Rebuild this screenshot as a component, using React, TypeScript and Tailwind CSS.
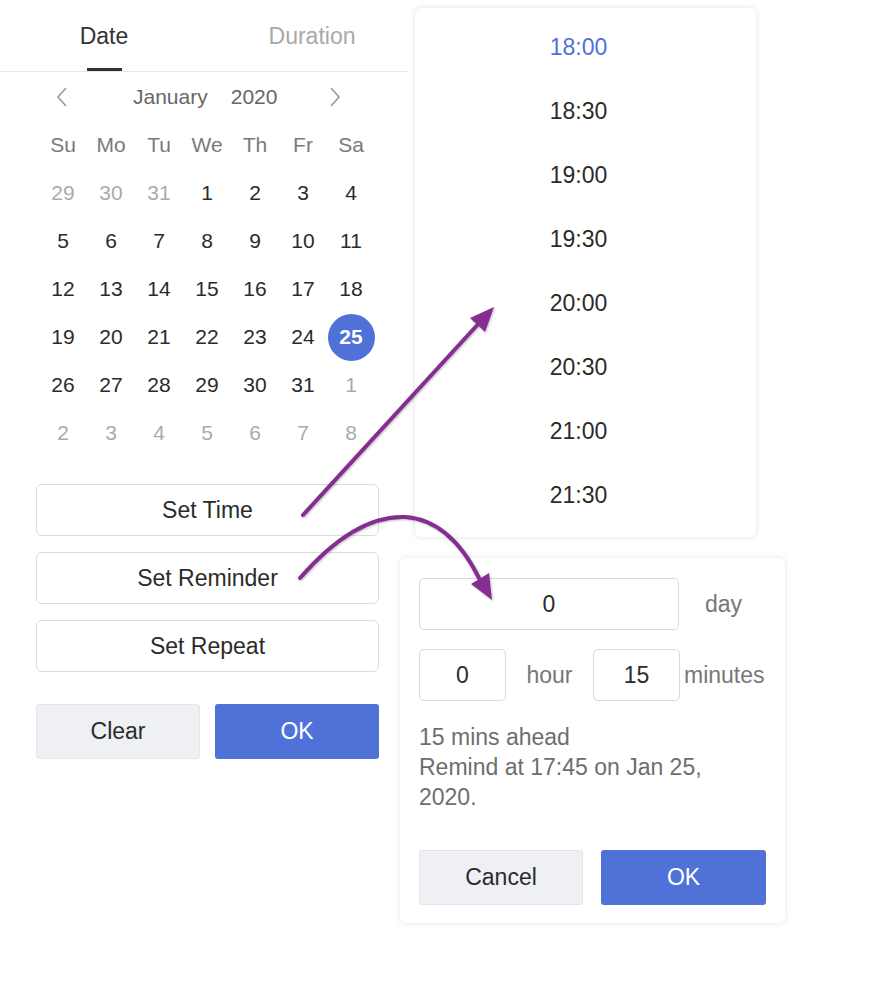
import React from 'react';

const font = { fontFamily: '"Liberation Sans", Arial, sans-serif' };

const weekdays = ['Su', 'Mo', 'Tu', 'We', 'Th', 'Fr', 'Sa'];

// [label, muted]
const days: [number, boolean][] = [
  [29, true], [30, true], [31, true], [1, false], [2, false], [3, false], [4, false],
  [5, false], [6, false], [7, false], [8, false], [9, false], [10, false], [11, false],
  [12, false], [13, false], [14, false], [15, false], [16, false], [17, false], [18, false],
  [19, false], [20, false], [21, false], [22, false], [23, false], [24, false], [25, false],
  [26, false], [27, false], [28, false], [29, false], [30, false], [31, false], [1, true],
  [2, true], [3, true], [4, true], [5, true], [6, true], [7, true], [8, true],
];

const times = ['18:00', '18:30', '19:00', '19:30', '20:00', '20:30', '21:00', '21:30'];

function Chevron({ dir }: { dir: 'left' | 'right' }) {
  return (
    <svg width="12" height="20" viewBox="0 0 12 20" fill="none" stroke="#9a9a9a" strokeWidth="1.6">
      {dir === 'left' ? <path d="M10 1 L2 10 L10 19" /> : <path d="M2 1 L10 10 L2 19" />}
    </svg>
  );
}

function DatePanel() {
  return (
    <div className="w-[408px] bg-white flex flex-col">
      {/* tabs */}
      <div className="h-[72px] border-b border-[#e8e8e8] flex overflow-hidden">
        <div className="w-[208px] shrink-0 flex flex-col items-center">
          <span className="mt-[22px] text-[23px] leading-[28px] text-[#333]">Date</span>
          <div className="mt-auto w-[35px] h-[3px] bg-[#333]" />
        </div>
        <div className="w-[208px] shrink-0 flex justify-center">
          <span className="mt-[22px] text-[23px] leading-[28px] text-[#a9a9a9]">Duration</span>
        </div>
      </div>

      {/* month nav */}
      <div className="h-[49px] flex items-center text-[21px] text-[#666]">
        <div className="w-[133px] pl-[56px]"><Chevron dir="left" /></div>
        <span>January</span>
        <span className="ml-[23px]">2020</span>
        <div className="ml-[52px]"><Chevron dir="right" /></div>
      </div>

      {/* grid */}
      <div className="pl-[39px] grid grid-cols-[repeat(7,48px)] auto-rows-[48px] text-[21px]">
        {weekdays.map((w) => (
          <div key={w} className="flex items-center justify-center text-[#7a7a7a]">{w}</div>
        ))}
        {days.map(([d, muted], i) => (
          <div key={i} className="flex items-center justify-center">
            {d === 25 && !muted ? (
              <span className="w-[47px] h-[47px] rounded-full bg-[#4f71d8] text-white font-bold flex items-center justify-center">25</span>
            ) : (
              <span className={muted ? 'text-[#ababab]' : 'text-[#2b2b2b]'}>{d}</span>
            )}
          </div>
        ))}
      </div>

      {/* actions */}
      <div className="mt-[27px] ml-[36px] w-[343px] flex flex-col gap-[16px]">
        {['Set Time', 'Set Reminder', 'Set Repeat'].map((l) => (
          <button key={l} className="h-[52px] rounded-[6px] border border-[#dcdcdc] bg-white text-[23px] text-[#2b2b2b]">{l}</button>
        ))}
      </div>
      <div className="mt-[32px] ml-[36px] w-[343px] flex gap-[15px]">
        <button className="w-[164px] h-[55px] rounded-[3px] border border-[#e2e4e8] bg-[#eef0f4] text-[23px] text-[#2b2b2b]">Clear</button>
        <button className="w-[164px] h-[55px] rounded-[3px] bg-[#5072d8] text-[23px] text-white">OK</button>
      </div>
      <div className="h-[40px]" />
    </div>
  );
}

function TimeDropdown() {
  return (
    <div className="ml-[7px] mt-[8px] w-[341px] h-[529px] bg-white rounded-[6px] shadow-[0_0_6px_rgba(0,0,0,0.12)] pt-[7px] pr-[14px]">
      {times.map((t, i) => (
        <div key={t} className={`h-[64px] flex items-center justify-center text-[23px] ${i === 0 ? 'text-[#4f71d8]' : 'text-[#2b2b2b]'}`}>{t}</div>
      ))}
    </div>
  );
}

function ReminderPanel() {
  return (
    <div className="ml-[-8px] mt-[21px] w-[385px] bg-white rounded-[6px] shadow-[0_0_6px_rgba(0,0,0,0.1)] px-[19px] pt-[20px] pb-[18px] text-[23px]">
      <div className="flex items-center">
        <div className="w-[260px] h-[52px] rounded-[5px] border border-[#d9d9d9] flex items-center justify-center text-[#2b2b2b]">0</div>
        <span className="ml-[26px] text-[#777]">day</span>
      </div>
      <div className="mt-[19px] flex items-center">
        <div className="w-[87px] h-[52px] rounded-[5px] border border-[#d9d9d9] flex items-center justify-center text-[#2b2b2b]">0</div>
        <span className="w-[87px] text-center text-[#777]">hour</span>
        <div className="w-[87px] h-[52px] rounded-[5px] border border-[#d9d9d9] flex items-center justify-center text-[#2b2b2b]">15</div>
        <span className="ml-[4px] text-[#777]">minutes</span>
      </div>
      <div className="mt-[21px] leading-[30px] text-[#6e6e6e]">
        <p>15 mins ahead</p>
        <p>Remind at 17:45 on Jan 25,<br />2020.</p>
      </div>
      <div className="mt-[38px] flex gap-[18px]">
        <button className="w-[164px] h-[55px] rounded-[3px] border border-[#e2e4e8] bg-[#eef0f4] text-[#2b2b2b]">Cancel</button>
        <button className="w-[165px] h-[55px] rounded-[3px] bg-[#5072d8] text-white">OK</button>
      </div>
    </div>
  );
}

function Arrows() {
  const c = '#862d91';
  return (
    <svg className="absolute left-0 top-0 pointer-events-none" width="882" height="1004" viewBox="0 0 882 1004" fill="none">
      <g style={{ filter: 'drop-shadow(1px 1px 1px rgba(0,0,0,0.25))' }}>
        <path d="M303 515 L480 322" stroke={c} strokeWidth="4" strokeLinecap="round" />
        <polygon points="494,307 485,332 470,318" fill={c} />
        <path d="M300 578 Q355 515 405 517 Q450 520 479 578" stroke={c} strokeWidth="4" strokeLinecap="round" />
        <polygon points="492,600 489,573 471,584" fill={c} />
      </g>
    </svg>
  );
}

export default function App() {
  return (
    <div className="relative w-[882px] h-[1004px] bg-white overflow-hidden" style={font}>
      <div className="flex">
        <DatePanel />
        <div className="flex flex-col">
          <TimeDropdown />
          <ReminderPanel />
        </div>
      </div>
      <Arrows />
    </div>
  );
}
